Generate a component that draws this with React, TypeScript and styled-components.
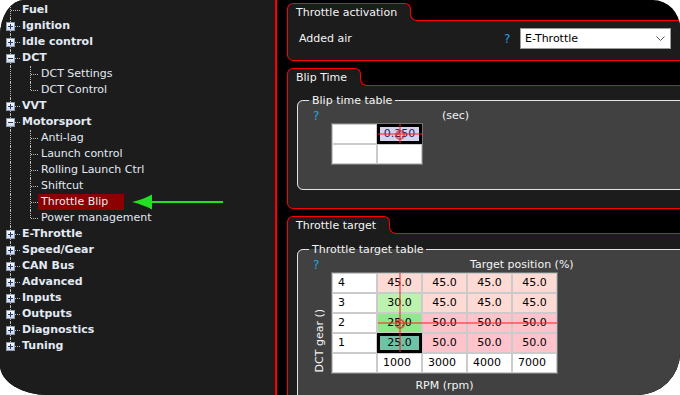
import React from 'react'
import styled, { createGlobalStyle } from 'styled-components'

const GlobalStyle = createGlobalStyle`
  html, body {
    margin: 0;
    padding: 0;
    background: #ffffff;
  }
  body {
    font-family: "DejaVu Sans", Verdana, sans-serif;
    font-size: 11px;
  }
`

const CELL_W = 43
const CELL_H = 18
const GAP = 2

type TreeItem = {
  label: string
  open?: boolean
  noBox?: boolean
  children?: string[]
}

const TREE: TreeItem[] = [
  { label: 'Fuel', noBox: true },
  { label: 'Ignition' },
  { label: 'Idle control' },
  { label: 'DCT', open: true, children: ['DCT Settings', 'DCT Control'] },
  { label: 'VVT' },
  {
    label: 'Motorsport',
    open: true,
    children: ['Anti-lag', 'Launch control', 'Rolling Launch Ctrl', 'Shiftcut', 'Throttle Blip', 'Power management'],
  },
  { label: 'E-Throttle' },
  { label: 'Speed/Gear' },
  { label: 'CAN Bus' },
  { label: 'Advanced' },
  { label: 'Inputs' },
  { label: 'Outputs' },
  { label: 'Diagnostics' },
  { label: 'Tuning' },
]

const SELECTED_ITEM = 'Throttle Blip'

const HEAT: { [key: string]: string } = {
  '25.0': '#8de98a',
  '30.0': '#bcf1ae',
  '45.0': '#fedad4',
  '50.0': '#ffc3cc',
}

const TARGET_ROWS = [
  { gear: '4', values: ['45.0', '45.0', '45.0', '45.0'] },
  { gear: '3', values: ['30.0', '45.0', '45.0', '45.0'] },
  { gear: '2', values: ['25.0', '50.0', '50.0', '50.0'] },
  { gear: '1', values: ['25.0', '50.0', '50.0', '50.0'] },
]
const RPM_AXIS = ['1000', '3000', '4000', '7000']

const Screen = styled.div`
  width: 680px;
  height: 395px;
  background: #ffffff;
  overflow: hidden;
`

const Frame = styled.div`
  display: flex;
  width: 100%;
  height: 100%;
  overflow: hidden;
  background: #000000;
  border-radius: 24px 27px 43px 48px / 36px 28px 42px 30px;
`

/* ---------- tree ---------- */

const Sidebar = styled.div`
  width: 275px;
  flex-shrink: 0;
  padding-top: 2px;
  background: #1c1c1c;
  border-right: 2px solid #ff0000;
  color: #e2eaf4;
`

const TreeRow = styled.div`
  display: flex;
  align-items: stretch;
  height: 16px;
`

const Guide = styled.div<{ $width: number; $line: 'full' | 'half'; $branch?: boolean }>`
  position: relative;
  flex-shrink: 0;
  width: ${(p) => p.$width}px;

  &::before {
    content: '';
    position: absolute;
    left: 10px;
    top: 0;
    height: ${(p) => (p.$line === 'half' ? '8px' : '100%')};
    border-left: 1px dotted #bdbdbd;
  }

  &::after {
    content: '';
    display: ${(p) => (p.$branch ? 'block' : 'none')};
    position: absolute;
    left: 11px;
    right: 0;
    top: 8px;
    border-top: 1px dotted #bdbdbd;
  }
`

const ExpandBox = styled.svg`
  position: absolute;
  z-index: 1;
  left: 6px;
  top: 4px;
`

const TopLabel = styled.span`
  padding-left: 2px;
  font-weight: bold;
  line-height: 16px;
  white-space: nowrap;
`

const ChildLabel = styled.span<{ $selected?: boolean }>`
  padding: 0 ${(p) => (p.$selected ? 16 : 3)}px 0 3px;
  line-height: 16px;
  white-space: nowrap;
  background: ${(p) => (p.$selected ? '#8b0000' : 'transparent')};
`

const Arrow = styled.svg`
  flex-shrink: 0;
  margin-left: 8px;
`

const Expander = ({ open }: { open?: boolean }) => (
  <ExpandBox width="9" height="9" viewBox="0 0 9 9">
    <defs>
      <linearGradient id="boxfill" x1="0" y1="0" x2="0" y2="1">
        <stop offset="0" stopColor="#ffffff" />
        <stop offset="1" stopColor="#cfd6df" />
      </linearGradient>
    </defs>
    <rect x="0.5" y="0.5" width="8" height="8" fill="url(#boxfill)" stroke="#8c9cb2" />
    <path d="M2 4.5H7" stroke="#1c3a78" />
    {!open && <path d="M4.5 2V7" stroke="#1c3a78" />}
  </ExpandBox>
)

const PointerArrow = () => (
  <Arrow width="92" height="16" viewBox="0 0 92 16">
    <path d="M0 8 Q12 5 20 0.5 L20 15.5 Q12 11 0 8 Z" fill="#22e022" />
    <rect x="19" y="7" width="72" height="2" fill="#22e022" />
  </Arrow>
)

const Tree = () => (
  <Sidebar>
    {TREE.map((item, i) => {
      const last = i === TREE.length - 1
      return (
        <React.Fragment key={item.label}>
          <TreeRow>
            <Guide $width={20} $line={last ? 'half' : 'full'} $branch>
              {!item.noBox && <Expander open={item.open} />}
            </Guide>
            <TopLabel>{item.label}</TopLabel>
          </TreeRow>
          {item.open &&
            item.children?.map((child, j) => {
              const selected = child === SELECTED_ITEM
              return (
                <TreeRow key={child}>
                  <Guide $width={20} $line="full" />
                  <Guide $width={18} $line={j === item.children!.length - 1 ? 'half' : 'full'} $branch />
                  <ChildLabel $selected={selected}>{child}</ChildLabel>
                  {selected && <PointerArrow />}
                </TreeRow>
              )
            })}
        </React.Fragment>
      )
    })}
  </Sidebar>
)

/* ---------- panels ---------- */

const Main = styled.div`
  flex: 1;
  min-width: 0;
  display: flex;
  flex-direction: column;
  align-items: flex-start;
  gap: 7px;
  padding: 3px 0 0 10px;
  overflow: hidden;
  color: #f4f4f4;
`

const Panel = styled.section`
  width: 430px;
  flex-shrink: 0;
  display: flex;
  flex-direction: column;
  align-items: flex-start;
`

const Tab = styled.div`
  position: relative;
  z-index: 1;
  box-sizing: border-box;
  height: 18px;
  margin-bottom: -1px;
  padding: 0 13px 0 8px;
  line-height: 17px;
  background: #1c1c1c;
  border: 1px solid #ff0000;
  border-bottom: none;
  border-radius: 6px 6px 0 0;

  &::before {
    content: '';
    position: absolute;
    left: 100%;
    bottom: 0;
    width: 6px;
    height: 7px;
    background: #1c1c1c;
  }

  &::after {
    content: '';
    position: absolute;
    left: 100%;
    bottom: 0;
    box-sizing: border-box;
    width: 8px;
    height: 8px;
    background: #000000;
    border-left: 1px solid #ff0000;
    border-bottom: 1px solid #ff0000;
    border-bottom-left-radius: 7px;
  }
`

const PanelBody = styled.div<{ $pad: string }>`
  align-self: stretch;
  padding: ${(p) => p.$pad};
  background: #1c1c1c;
  border: 1px solid #ff0000;
  border-radius: 0 6px 6px 6px;
`

const FieldRow = styled.div`
  display: flex;
  align-items: center;
  height: 21px;
`

const FieldLabel = styled.span`
  width: 205px;
`

const Help = styled.span`
  width: 6px;
  color: #23a1e3;
  font-size: 12px;
`

const Select = styled.div`
  box-sizing: border-box;
  width: 151px;
  height: 21px;
  margin-left: 10px;
  display: flex;
  align-items: center;
  justify-content: space-between;
  padding: 0 5px 0 4px;
  background: #ffffff;
  border: 1px solid #9c9c9c;
  color: #000000;
`

const Group = styled.fieldset<{ $padBottom: number }>`
  min-width: 0;
  margin: 0;
  padding: 0 0 ${(p) => p.$padBottom}px 11px;
  background: #414141;
  border: 1px solid #e4e4e4;
  border-radius: 6px;
`

const GroupTitle = styled.legend`
  padding: 0 3px;
  line-height: 13px;
  color: #f4f4f4;
`

const TableBlock = styled.div`
  display: grid;
  grid-template-columns: 18px max-content;
  justify-content: start;
  padding-left: 4px;
`

// zero width so the long titles do not widen the table column
const TableHeader = styled.div`
  grid-column: 1 / -1;
  display: flex;
  width: 0;
  height: 14px;
  margin-top: 2px;
  line-height: 14px;
  white-space: nowrap;
`

const TableTitle = styled.span<{ $offset: number }>`
  padding-left: ${(p) => p.$offset}px;
`

const YAxisLabel = styled.span`
  align-self: end;
  justify-self: start;
  margin-bottom: 2px;
  line-height: 13px;
  writing-mode: vertical-rl;
  transform: rotate(180deg);
`

const XAxisLabel = styled.div`
  grid-column: 2;
  margin-top: 5px;
  line-height: 14px;
  text-align: center;
`

const Grid = styled.div<{ $cols: number }>`
  grid-column: 2;
  position: relative;
  display: grid;
  grid-template-columns: repeat(${(p) => p.$cols}, ${CELL_W}px);
  grid-auto-rows: ${CELL_H}px;
  gap: ${GAP}px;
  padding: 1px;
  background: #cbcbcb;
  border: 1px solid #737373;
`

const Cell = styled.div<{ $bg?: string; $center?: boolean; $selected?: boolean }>`
  position: relative;
  padding-left: ${(p) => (p.$center ? 0 : 5)}px;
  background: ${(p) => p.$bg || '#ffffff'};
  color: #000000;
  line-height: ${CELL_H}px;
  text-align: ${(p) => (p.$center ? 'center' : 'left')};
  ${(p) =>
    p.$selected &&
    `
    z-index: 1;
    box-shadow: 0 0 0 1px #000000, inset 0 0 0 2px #000000;
  `}
`

const LavenderValue = styled.span`
  color: #1b1b5e;
`

const Cross = styled.div`
  position: absolute;
  z-index: 2;
  pointer-events: none;
`

const CrossH = styled.div`
  position: absolute;
  left: 0;
  right: 0;
  height: 2px;
  margin-top: -1px;
  background: rgba(255, 30, 30, 0.5);
`

const CrossV = styled.div`
  position: absolute;
  top: 0;
  bottom: 0;
  width: 2px;
  margin-left: -1px;
  background: rgba(255, 30, 30, 0.5);
`

const CrossRing = styled.div`
  position: absolute;
  width: 10px;
  height: 10px;
  box-sizing: border-box;
  margin: -5px 0 0 -5px;
  border: 2px solid rgba(210, 40, 40, 0.65);
  border-radius: 50%;
`

// crosshair over the data area of a table, at the given data row / column
const Crosshair = ({ rows, cols, row, col }: { rows: number; cols: number; row: number; col: number }) => {
  const left = 1 + CELL_W + GAP
  const width = cols * (CELL_W + GAP) - GAP + 1
  const height = rows * (CELL_H + GAP) - GAP + 1
  const x = col * (CELL_W + GAP) + CELL_W / 2
  const y = row * (CELL_H + GAP) + CELL_H / 2 + 1
  return (
    <Cross style={{ left, top: 0, width, height }}>
      <CrossH style={{ top: y }} />
      <CrossV style={{ left: x }} />
      <CrossRing style={{ left: x, top: y + 1 }} />
    </Cross>
  )
}

const Chevron = () => (
  <svg width="9" height="5" viewBox="0 0 9 5">
    <path d="M0.5 0.5L4.5 4.5L8.5 0.5" fill="none" stroke="#555555" />
  </svg>
)

const BlipTable = () => (
  <TableBlock>
    <TableHeader>
      <Help>?</Help>
      <TableTitle $offset={123}>(sec)</TableTitle>
    </TableHeader>
    <Grid $cols={2}>
      <Cell />
      <Cell $bg="#d3d3ef" $center $selected>
        <LavenderValue>0.250</LavenderValue>
      </Cell>
      <Cell />
      <Cell />
      <Crosshair rows={1} cols={1} row={0} col={0} />
    </Grid>
  </TableBlock>
)

const TargetTable = () => (
  <TableBlock>
    <TableHeader>
      <Help>?</Help>
      <TableTitle $offset={151}>Target position (%)</TableTitle>
    </TableHeader>
    <YAxisLabel>DCT gear ()</YAxisLabel>
    <Grid $cols={5}>
      {TARGET_ROWS.map((r, ri) => (
        <React.Fragment key={r.gear}>
          <Cell>{r.gear}</Cell>
          {r.values.map((v, ci) => {
            const selected = ri === 3 && ci === 0
            return (
              <Cell key={ci} $center $selected={selected} $bg={selected ? '#71c1a7' : HEAT[v]}>
                {v}
              </Cell>
            )
          })}
        </React.Fragment>
      ))}
      <Cell />
      {RPM_AXIS.map((rpm) => (
        <Cell key={rpm}>{rpm}</Cell>
      ))}
      <Crosshair rows={4} cols={4} row={2} col={0} />
    </Grid>
    <XAxisLabel>RPM (rpm)</XAxisLabel>
  </TableBlock>
)

const App = () => (
  <>
    <GlobalStyle />
    <Screen>
      <Frame>
        <Tree />
        <Main>
          <Panel>
            <Tab>Throttle activation</Tab>
            <PanelBody $pad="7px 0 11px 11px">
              <FieldRow>
                <FieldLabel>Added air</FieldLabel>
                <Help>?</Help>
                <Select>
                  E-Throttle
                  <Chevron />
                </Select>
              </FieldRow>
            </PanelBody>
          </Panel>

          <Panel>
            <Tab>Blip Time</Tab>
            <PanelBody $pad="8px 0 18px 9px">
              <Group $padBottom={24}>
                <GroupTitle>Blip time table</GroupTitle>
                <BlipTable />
              </Group>
            </PanelBody>
          </Panel>

          <Panel>
            <Tab>Throttle target</Tab>
            <PanelBody $pad="9px 0 30px 9px">
              <Group $padBottom={30}>
                <GroupTitle>Throttle target table</GroupTitle>
                <TargetTable />
              </Group>
            </PanelBody>
          </Panel>
        </Main>
      </Frame>
    </Screen>
  </>
)

export default App
